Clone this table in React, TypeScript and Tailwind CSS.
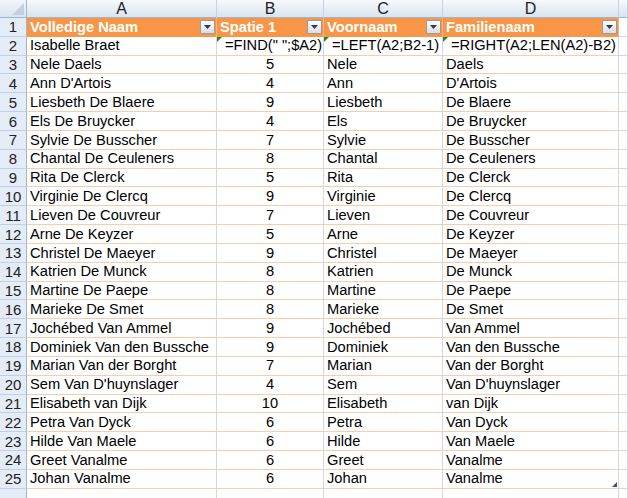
const rows: [string, string, string, string][] = [
  ["Nele Daels", "5", "Nele", "Daels"],
  ["Ann D'Artois", "4", "Ann", "D'Artois"],
  ["Liesbeth De Blaere", "9", "Liesbeth", "De Blaere"],
  ["Els De Bruycker", "4", "Els", "De Bruycker"],
  ["Sylvie De Busscher", "7", "Sylvie", "De Busscher"],
  ["Chantal De Ceuleners", "8", "Chantal", "De Ceuleners"],
  ["Rita De Clerck", "5", "Rita", "De Clerck"],
  ["Virginie De Clercq", "9", "Virginie", "De Clercq"],
  ["Lieven De Couvreur", "7", "Lieven", "De Couvreur"],
  ["Arne De Keyzer", "5", "Arne", "De Keyzer"],
  ["Christel De Maeyer", "9", "Christel", "De Maeyer"],
  ["Katrien De Munck", "8", "Katrien", "De Munck"],
  ["Martine De Paepe", "8", "Martine", "De Paepe"],
  ["Marieke De Smet", "8", "Marieke", "De Smet"],
  ["Jochébed Van Ammel", "9", "Jochébed", "Van Ammel"],
  ["Dominiek Van den Bussche", "9", "Dominiek", "Van den Bussche"],
  ["Marian Van der Borght", "7", "Marian", "Van der Borght"],
  ["Sem Van D'huynslager", "4", "Sem", "Van D'huynslager"],
  ["Elisabeth van Dijk", "10", "Elisabeth", "van Dijk"],
  ["Petra Van Dyck", "6", "Petra", "Van Dyck"],
  ["Hilde Van Maele", "6", "Hilde", "Van Maele"],
  ["Greet Vanalme", "6", "Greet", "Vanalme"],
  ["Johan Vanalme", "6", "Johan", "Vanalme"],
];

const cols = "grid grid-cols-[27px_190px_107px_119px_176px_1fr]";

function FilterButton() {
  return (
    <div className="mr-[1px] flex h-[14px] w-[15px] shrink-0 items-center justify-center rounded-[1px] border border-[#9a9a9a] bg-gradient-to-b from-[#fdfdfd] to-[#d9dde5]">
      <svg width="7" height="4" viewBox="0 0 7 4">
        <path d="M0 0h7L3.5 4z" fill="#2f3a4e" />
      </svg>
    </div>
  );
}

function RowNum({ n }: { n?: number }) {
  return (
    <div className="flex items-center justify-center border-r border-b border-r-[#9eb6ce] border-b-[#c3d0e4] bg-[#e4ecf7] text-[15px] text-[#222]">
      {n}
    </div>
  );
}

function GreenTick() {
  return (
    <svg className="absolute left-0 top-0" width="5" height="5" viewBox="0 0 5 5">
      <path d="M0 0h5L0 5z" fill="#1f8a1f" />
    </svg>
  );
}

const cell = "flex items-center overflow-hidden whitespace-nowrap border-r border-b border-r-[#d0d7e5] border-b-[#fbcda6] px-[3px]";

export default function App() {
  return (
    <div className="h-[498px] w-[628px] overflow-hidden bg-white font-['Liberation_Sans',Arial,sans-serif] text-[14.67px] leading-none text-black">
      {/* column letters */}
      <div className={`${cols} h-[18px]`}>
        <div className="relative border-r border-b border-[#9eb6ce] bg-gradient-to-b from-[#f3f6fb] to-[#d9e3f0]">
          <svg className="absolute bottom-[2px] right-[2px]" width="12" height="12" viewBox="0 0 12 12">
            <path d="M12 0v12H0z" fill="#c4cfdf" />
          </svg>
        </div>
        {["A", "B", "C", "D", ""].map((l, i) => (
          <div
            key={i}
            className="flex items-center justify-center border-r border-b border-r-[#c5d2e3] border-b-[#9eb6ce] bg-gradient-to-b from-[#f7f9fc] to-[#dae3ef] text-[16px] text-[#222]"
          >
            {l}
          </div>
        ))}
      </div>

      {/* header row */}
      <div className={`${cols} h-[18.84px]`}>
        <RowNum n={1} />
        {["Volledige Naam", "Spatie 1", "Voornaam", "Familienaam"].map((h) => (
          <div key={h} className="flex items-center justify-between border-r border-[#f9b27c] bg-[#f79646] pl-[3px] font-bold text-white">
            <span>{h}</span>
            <FilterButton />
          </div>
        ))}
        <div className="border-r border-b border-r-[#d0d7e5] border-b-[#d0d7e5]" />
      </div>

      {/* formula row */}
      <div className={`${cols} h-[18.84px]`}>
        <RowNum n={2} />
        <div className={cell}>Isabelle Braet</div>
        <div className={`${cell} relative pl-[8px]`}>
          <GreenTick />=FIND(" ";$A2)
        </div>
        <div className={`${cell} relative pl-[8px]`}>
          <GreenTick />=LEFT(A2;B2-1)
        </div>
        <div className={`${cell} relative pl-[8px]`}>
          <GreenTick />=RIGHT(A2;LEN(A2)-B2)
        </div>
        <div className="border-r border-b border-[#d0d7e5]" />
      </div>

      {rows.map((r, i) => (
        <div key={r[0]} className={`${cols} h-[18.84px]`}>
          <RowNum n={i + 3} />
          <div className={cell}>{r[0]}</div>
          <div className={`${cell} justify-center`}>{r[1]}</div>
          <div className={cell}>{r[2]}</div>
          <div className={`${cell} relative`}>
            {r[3]}
            {i === rows.length - 1 && (
              <svg className="absolute bottom-[1px] right-[1px]" width="5" height="5" viewBox="0 0 5 5">
                <path d="M5 0v5H0z" fill="#3b4a7a" />
              </svg>
            )}
          </div>
          <div className="border-r border-b border-[#d0d7e5]" />
        </div>
      ))}

      {/* partial row below the table */}
      <div className={`${cols} h-[18.84px]`}>
        <RowNum />
        <div className="border-r border-b border-[#d0d7e5]" />
        <div className="border-r border-b border-[#d0d7e5]" />
        <div className="border-r border-b border-[#d0d7e5]" />
        <div className="border-r border-b border-[#d0d7e5]" />
        <div className="border-r border-b border-[#d0d7e5]" />
      </div>
    </div>
  );
}
